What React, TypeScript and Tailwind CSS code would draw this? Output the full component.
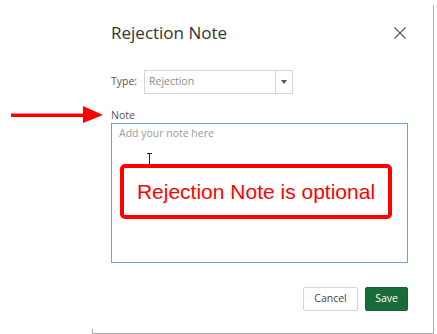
import * as React from 'react'

// red annotation arrow pointing at the Note label
function PointerArrow() {
  return (
    <svg width="94" height="18" viewBox="0 0 94 18" className="block">
      <rect x="0" y="7.5" width="74" height="3.5" fill="#ff0000" />
      <polygon points="72,0 92,9 72,17" fill="#ff0000" />
    </svg>
  )
}

function CloseIcon() {
  return (
    <svg width="12" height="12" viewBox="0 0 12 12" className="block">
      <path d="M0.5 0.5 L11.5 11.5 M11.5 0.5 L0.5 11.5" stroke="#5a5a5a" strokeWidth="1.1" fill="none" />
    </svg>
  )
}

export default function App() {
  return (
    <div className="relative w-[437px] h-[334px] overflow-hidden bg-white font-['Open_Sans',sans-serif]">
      <div className="absolute left-[11px] top-[106px]">
        <PointerArrow />
      </div>

      <div className="ml-[92px] mt-[5px] flex h-[329px] w-[342px] flex-col border-r border-b border-[#acacac]">
        <div className="pl-[19px] pr-[25px] pt-[16px]">
          {/* header */}
          <div className="flex h-[24px] items-center justify-between">
            <h2 className="text-[17px] leading-[24px] text-[#333]">Rejection Note</h2>
            <div className="mr-[2px]">
              <CloseIcon />
            </div>
          </div>

          {/* type */}
          <div className="mt-[25px] flex h-[24px] items-center">
            <span className="w-[33px] text-[10.5px] text-[#555]">Type:</span>
            <div className="flex h-[24px] w-[149px] items-center border border-[#d6d6d6]">
              <span className="flex-1 pl-[4px] text-[10.5px] text-[#8a8a8a]">Rejection</span>
              <div className="flex h-full w-[17px] items-center justify-center border-l border-[#d6d6d6]">
                <span className="block h-0 w-0 border-x-[3.5px] border-t-[4px] border-x-transparent border-t-[#555]" />
              </div>
            </div>
          </div>

          {/* note */}
          <div className="mt-[14px] text-[10.5px] leading-[14px] text-[#555]">Note</div>
          <div className="relative mt-[1px]">
            <textarea
              className="block h-[140px] w-full resize-none border border-[#6aa3d8] px-[7px] pt-[2px] text-[10.5px] leading-[14px] text-[#333] outline-none placeholder:text-[#9a9a9a]"
              placeholder="Add your note here"
            />
            <div className="absolute left-[36px] top-[30px] flex flex-col items-center">
              <span className="block h-px w-[5px] bg-[#222]" />
              <span className="block h-[10px] w-px bg-[#222]" />
            </div>
            <div className="absolute left-[9px] top-[41px] flex h-[55px] w-[272px] items-center justify-center rounded-[5px] border-[4px] border-[#ff0000] bg-white">
              <span className="font-['Liberation_Sans',Arial,sans-serif] text-[21px] text-[#ff0000]">
                Rejection Note is optional
              </span>
            </div>
          </div>

          {/* actions */}
          <div className="mt-[24px] flex justify-end gap-[7px]">
            <button className="h-[24px] w-[55px] rounded-[2px] border border-[#d4d4d4] bg-white text-[10.5px] text-[#444]">
              Cancel
            </button>
            <button className="h-[24px] w-[43px] rounded-[2px] border border-[#14602f] bg-[#196b37] text-[10.5px] text-white">
              Save
            </button>
          </div>
        </div>
        <div className="mt-auto h-[4px] w-0 border-l border-[#acacac]" />
      </div>
    </div>
  )
}
